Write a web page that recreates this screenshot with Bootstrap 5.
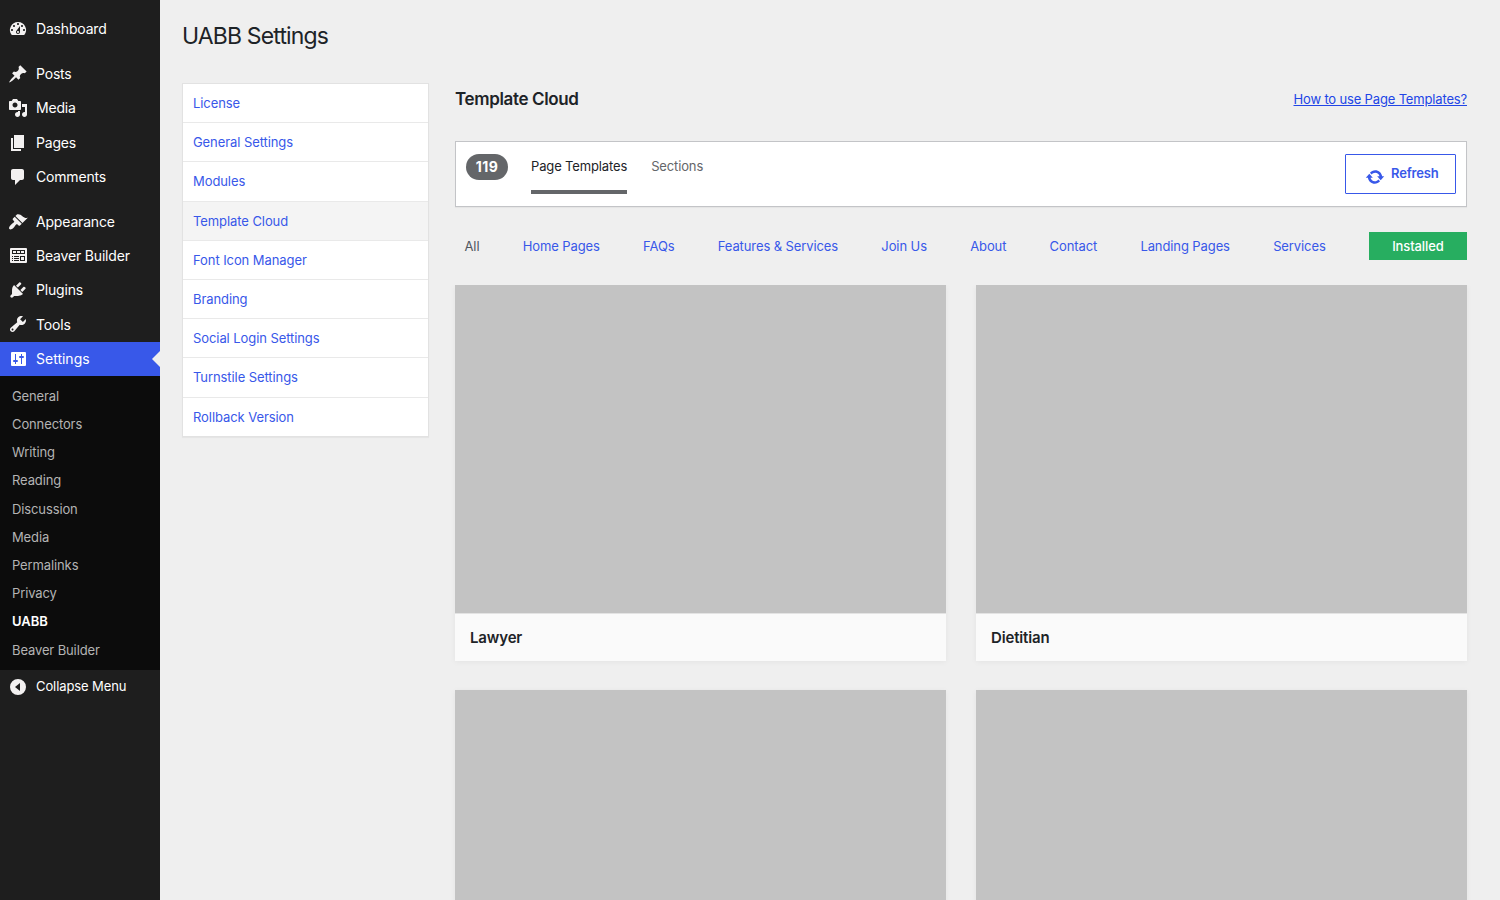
<!DOCTYPE html>
<html lang="en">
<head>
<meta charset="utf-8">
<meta name="viewport" content="width=device-width, initial-scale=1">
<title>UABB Settings</title>
<link href="https://cdn.jsdelivr.net/npm/bootstrap@5.3.0/dist/css/bootstrap.min.css" rel="stylesheet">
<style>
  body { background: #efefef; color: #1d2327; font: 13px/18.2px Inter, "Liberation Sans", sans-serif; letter-spacing: -.1px; height: 900px; overflow: hidden; }
  a { color: #3858e9; text-decoration: none; }
  .admin-menu { width: 160px; height: 900px; background: #1e1e1e; padding-top: 12.1px; }
  .menu-row { height: 34.2px; font-size: 14px; color: #fff; letter-spacing: -.18px; padding-left: 8px; gap: 8px; }
  .menu-row svg { width: 20px; height: 20px; fill: #f3f1f1; flex: none; margin-bottom: .4px; }
  .menu-row.current { background: #3858e9; position: relative; letter-spacing: 0; }
  .menu-row.current::after { content: ""; position: absolute; right: 0; top: 9px; border: 8px solid transparent; border-left: 0; border-right-color: #efefef; }
  .menu-gap { height: 11px; }
  .submenu { background: #0c0c0c; padding: 5.900px 12px 6px; }
  .submenu a { display: block; color: #b4b4b4; padding: 5px 0; height: 28.2px; letter-spacing: -.12px; }
  .submenu a.current { color: #fff; font-weight: 600; letter-spacing: 0; }
  .menu-row.fold { font-size: 13px; letter-spacing: -.1px; height: 33.2px; }
  .menu-row.fold svg { margin: 1px 0 0; }
  .main-area { padding-left: 22px; }
  .page-title { font-size: 23px; line-height: 30px; font-weight: 400; letter-spacing: -.85px; margin: 21px 0 32px; }
  .settings-nav { width: 247px; border: 1px solid #e2e2e2; box-shadow: 0 1px 1px rgba(0,0,0,.04); background: #fff; letter-spacing: -.08px; }
  .settings-nav a { height: 39.2px; padding: 10px; border-bottom: 1px solid #e9e9e9; display: block; }
  .settings-nav a:last-child { border-bottom: 0; height: 38.4px; }
  .settings-nav a.current { background: #f4f4f4; }
  .cloud { width: 1012px; margin-left: 26px; }
  .cloud h2 { font-size: 17px; line-height: 24px; font-weight: 600; letter-spacing: -.36px; margin: 0; }
  .help { color: #2145e6; text-decoration: underline; letter-spacing: -.16px; padding-top: 1px; }
  .cloud-head { height: 32px; margin-bottom: 26px; }
  .filter-bar { height: 66px; border: 1px solid #c3c4c7; background: #fff; padding: 12px 10px; box-shadow: 0 1px 1px rgba(0,0,0,.04); }
  .count { width: 42px; height: 26px; border-radius: 13px; background: #646669; color: #fff; font-size: 14px; font-weight: 700; letter-spacing: .5px; margin-right: 23px; }
  .kind { height: 40px; padding-top: 3px; color: #646669; letter-spacing: -.14px; margin-right: 24px; }
  .kind.current { color: #1d2327; border-bottom: 4px solid #646669; }
  .refresh { width: 111px; height: 40px; border: 1px solid #3858e9; border-radius: 1px; font-weight: 600; letter-spacing: -.15px; padding: 9px 0 0 19px; gap: 6px; }
  .refresh svg { width: 20px; height: 20px; fill: #3858e9; margin-top: 3px; }
  .cats { height: 28px; margin: 25px 0; padding-left: 9.500px; }
  .cats .active { color: #50575e; }
  .installed { width: 98px; height: 28px; background: #27ae60; color: #fff; font-weight: 500; }
  .tiles { display: grid; grid-template-columns: 491px 491px; gap: 29px 30px; height: 615px; overflow: hidden; margin: 0 -10px; padding: 0 10px; }
  .tile { height: 376px; background: #fafafa; box-shadow: 0 1px 6px rgba(0,0,0,.05); }
  .shot { height: 328px; background: #c3c3c3; }
  .tile h3 { font-size: 15px; line-height: 48px; font-weight: 600; letter-spacing: -.15px; margin: 0; padding-left: 15px; border-top: 1px solid #e3e3e3; height: 48px; }
</style>
</head>
<body>
<div class="d-flex">
  <nav class="admin-menu flex-shrink-0">
    <a class="menu-row d-flex align-items-center" href="#"><svg viewBox="0 0 20 20"><path fill-rule="evenodd" d="M3.76 16h12.48A7.998 7.998 0 0 0 10 3a7.998 7.998 0 0 0-6.24 13zM10 4c.55 0 1 .45 1 1s-.45 1-1 1-1-.45-1-1 .45-1 1-1zM6 6c.55 0 1 .45 1 1s-.45 1-1 1-1-.45-1-1 .45-1 1-1zm8 0c.55 0 1 .45 1 1s-.45 1-1 1-1-.45-1-1 .45-1 1-1zm-5.37 5.55L12 7v6c0 1.1-.9 2-2 2s-2-.9-2-2c0-.57.24-1.08.63-1.45zM4 10c.55 0 1 .45 1 1s-.45 1-1 1-1-.45-1-1 .45-1 1-1zm12 0c.55 0 1 .45 1 1s-.45 1-1 1-1-.45-1-1 .45-1 1-1zm-5 3c0-.55-.45-1-1-1s-1 .45-1 1 .45 1 1 1 1-.45 1-1z"/></svg><span>Dashboard</span></a>
    <div class="menu-gap"></div>
    <a class="menu-row d-flex align-items-center" href="#"><svg viewBox="0 0 20 20"><path d="M10.44 3.02l1.82-1.82 6.36 6.35-1.83 1.82c-1.05-.68-2.48-.57-3.41.36l-.75.75c-.92.93-1.04 2.35-.35 3.41l-1.83 1.82-2.41-2.41-2.8 2.79c-.42.42-3.38 2.71-3.8 2.29s1.86-3.39 2.28-3.81l2.79-2.79L4.1 9.36l1.83-1.82c1.05.69 2.48.57 3.4-.36l.75-.75c.93-.92 1.05-2.35.36-3.41z"/></svg><span>Posts</span></a>
    <a class="menu-row d-flex align-items-center" href="#"><svg viewBox="0 0 20 20"><path fill-rule="evenodd" d="M13 11V4c0-.55-.45-1-1-1h-1.67L9 1H5L3.67 3H2c-.55 0-1 .45-1 1v7c0 .55.45 1 1 1h10c.55 0 1-.45 1-1zM7 4.5c1.38 0 2.5 1.12 2.5 2.5S8.38 9.5 7 9.5 4.5 8.38 4.5 7 5.62 4.5 7 4.5zM14 6h5v10.5c0 1.38-1.12 2.5-2.5 2.5S14 17.88 14 16.5s1.12-2.5 2.5-2.5c.17 0 .34.02.5.05V9h-3V6zm-4 8.05V13h2v3.5c0 1.38-1.12 2.5-2.5 2.5S7 17.88 7 16.5 8.12 14 9.5 14c.17 0 .34.02.5.05z"/></svg><span>Media</span></a>
    <a class="menu-row d-flex align-items-center" href="#"><svg viewBox="0 0 20 20"><path d="M6 15V2h10v13H6zm-1 1h8v2H3V5h2v11z"/></svg><span>Pages</span></a>
    <a class="menu-row d-flex align-items-center" href="#"><svg viewBox="0 0 20 20"><path d="M5 2h9c1.1 0 2 .9 2 2v7c0 1.1-.9 2-2 2h-2l-5 5v-5H5c-1.1 0-2-.9-2-2V4c0-1.1.9-2 2-2z"/></svg><span>Comments</span></a>
    <div class="menu-gap"></div>
    <a class="menu-row d-flex align-items-center" href="#"><svg viewBox="0 0 20 20"><path d="M14.48 11.06L7.41 3.99l1.5-1.5c.5-.56 2.3-.47 3.51.32 1.21.8 1.43 1.28 2.91 2.1 1.18.64 2.45 1.26 4.45.85zm-.71.71L6.7 4.7 4.93 6.47c-.39.39-.39 1.02 0 1.41l1.06 1.06c.39.39.39 1.03 0 1.42-.6.6-1.43 1.11-2.21 1.69-.35.26-.7.53-1.01.84C1.43 14.23.4 16.08 1.4 17.07c.99 1 2.84-.03 4.18-1.36.31-.31.58-.66.85-1.02.57-.78 1.08-1.61 1.69-2.21.39-.39 1.02-.39 1.41 0l1.06 1.06c.39.39 1.02.39 1.41 0z"/></svg><span>Appearance</span></a>
    <a class="menu-row d-flex align-items-center" href="#"><svg viewBox="0 0 20 20"><path fill-rule="evenodd" d="M3 2h15a1 1 0 0 1 1 1v13a1 1 0 0 1-1 1H3a1 1 0 0 1-1-1V3a1 1 0 0 1 1-1zM4 4v4h13V4zM5 5h3v2H5zm4 0h3v2H9zm4 0h3v2h-3zM4 10v1h1v-1zm2 0v1h5v-1zM4 12v1h1v-1zm2 0v1h5v-1zM4 14v1h1v-1zm2 0v1h5v-1zM12 10v5h5v-5zm1 1h3v3h-3z"/></svg><span>Beaver Builder</span></a>
    <a class="menu-row d-flex align-items-center" href="#"><svg viewBox="0 0 20 20"><path d="M13.110 4.360L9.870 7.600 8 5.730l3.240-3.240c.35-.34 1.050-.2 1.560.32.52.51.66 1.210.31 1.550zm-8 1.770l.91-1.120 9.010 9.010-1.190.84c-.71.71-2.630 1.160-3.820 1.160H6.140L4.900 17.260c-.59.59-1.540.59-2.120 0-.59-.58-.59-1.530 0-2.120l1.240-1.240v-3.880c0-1.130.4-3.190 1.090-3.890zm7.260 3.970l3.240-3.240c.34-.35 1.040-.21 1.550.31.52.51.66 1.210.31 1.550l-3.240 3.250z"/></svg><span>Plugins</span></a>
    <a class="menu-row d-flex align-items-center" href="#"><svg viewBox="0 0 20 20"><path fill-rule="evenodd" d="M16.680 9.770c-1.340 1.340-3.300 1.670-4.950.99l-5.410 6.520c-.99.99-2.590.99-3.580 0s-.99-2.590 0-3.570l6.520-5.420c-.68-1.650-.35-3.610.99-4.950 1.280-1.280 3.120-1.620 4.720-1.060l-2.890 2.890 2.820 2.820 2.860-2.870c.53 1.580.18 3.390-1.080 4.650zM3.810 16.210c.4.39 1.040.39 1.430 0 .4-.4.4-1.040 0-1.430-.39-.4-1.030-.4-1.430 0-.39.39-.39 1.030 0 1.430z"/></svg><span>Tools</span></a>
    <a class="menu-row current d-flex align-items-center" href="#"><svg viewBox="0 0 20 20"><path fill="#fff" fill-rule="evenodd" d="M4 3h13a1 1 0 0 1 1 1v12a1 1 0 0 1-1 1H4a1 1 0 0 1-1-1V4a1 1 0 0 1 1-1zM7 5v6H6a1 1 0 0 0 0 2h1v2h1v-2h1a1 1 0 0 0 0-2H8V5zm6 0v2h-1a1 1 0 0 0 0 2h1v6h1V9h1a1 1 0 0 0 0-2h-1V5z"/></svg><span>Settings</span></a>
    <div class="submenu">
      <a href="#">General</a>
      <a href="#">Connectors</a>
      <a href="#">Writing</a>
      <a href="#">Reading</a>
      <a href="#">Discussion</a>
      <a href="#">Media</a>
      <a href="#">Permalinks</a>
      <a href="#">Privacy</a>
      <a href="#" class="current">UABB</a>
      <a href="#">Beaver Builder</a>
    </div>
    <a class="menu-row fold d-flex align-items-center" href="#"><svg viewBox="0 0 20 20"><path fill-rule="evenodd" d="M10 2a8 8 0 1 1 0 16 8 8 0 0 1 0-16zM12 6v8l-5-4z"/></svg><span>Collapse Menu</span></a>
  </nav>
  <main class="main-area flex-grow-1">
    <h1 class="page-title">UABB Settings</h1>
    <div class="d-flex align-items-start">
      <nav class="settings-nav flex-shrink-0">
        <a href="#">License</a>
        <a href="#">General Settings</a>
        <a href="#">Modules</a>
        <a href="#" class="current">Template Cloud</a>
        <a href="#">Font Icon Manager</a>
        <a href="#">Branding</a>
        <a href="#">Social Login Settings</a>
        <a href="#">Turnstile Settings</a>
        <a href="#">Rollback Version</a>
      </nav>
      <section class="cloud">
        <div class="cloud-head d-flex justify-content-between align-items-center"><h2>Template Cloud</h2><a class="help" href="#">How to use Page Templates?</a></div>
        <div class="filter-bar d-flex">
          <span class="count d-flex align-items-center justify-content-center">119</span>
          <a class="kind current" href="#">Page Templates</a>
          <a class="kind" href="#">Sections</a>
          <a class="refresh ms-auto d-flex align-items-start" href="#"><svg viewBox="0 0 20 20"><path d="M10.200 3.280c3.530 0 6.430 2.610 6.920 6h2.080l-3.500 4-3.500-4h2.320c-.45-1.970-2.210-3.450-4.320-3.450-1.450 0-2.730.71-3.540 1.780L4.950 5.660C6.230 4.200 8.110 3.280 10.200 3.280zm-.4 13.440c-3.520 0-6.430-2.610-6.920-6H.8l3.500-4 3.500 4H5.480c.45 1.970 2.210 3.450 4.320 3.450 1.450 0 2.730-.71 3.540-1.780l1.710 1.950c-1.280 1.460-3.150 2.380-5.250 2.380z"/></svg><span>Refresh</span></a>
        </div>
        <div class="cats d-flex justify-content-between align-items-center">
          <a href="#" class="active">All</a>
          <a href="#">Home Pages</a>
          <a href="#">FAQs</a>
          <a href="#">Features &amp; Services</a>
          <a href="#">Join Us</a>
          <a href="#">About</a>
          <a href="#">Contact</a>
          <a href="#">Landing Pages</a>
          <a href="#">Services</a>
          <a href="#" class="installed d-flex align-items-center justify-content-center">Installed</a>
        </div>
        <div class="tiles">
          <article class="tile"><div class="shot"></div><h3>Lawyer</h3></article>
          <article class="tile"><div class="shot"></div><h3>Dietitian</h3></article>
          <article class="tile"><div class="shot"></div></article>
          <article class="tile"><div class="shot"></div></article>
        </div>
      </section>
    </div>
  </main>
</div>
<script src="https://cdn.jsdelivr.net/npm/bootstrap@5.3.0/dist/js/bootstrap.bundle.min.js"></script>
</body>
</html>
